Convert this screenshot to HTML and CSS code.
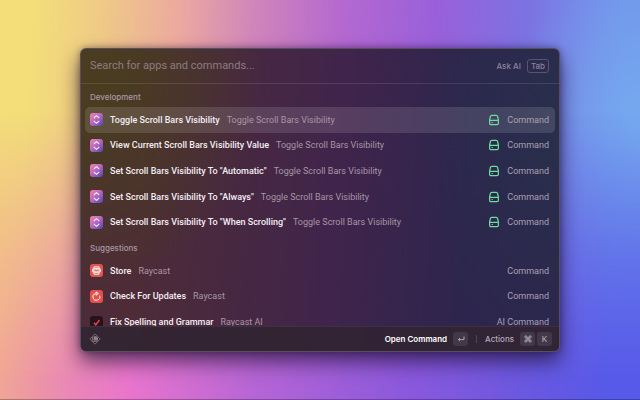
FILE: index.html
```html
<!DOCTYPE html>
<html lang="en">
<head>
<meta charset="utf-8">
<title>Launcher</title>
<link rel="stylesheet" href="styles.css">
</head>
<body>
<svg class="defs" aria-hidden="true">
  <defs>
    <linearGradient id="pink" x1="0" y1="0" x2="1" y2="1">
      <stop offset="0" stop-color="#f583b0"/>
      <stop offset=".5" stop-color="#b465c0"/>
      <stop offset="1" stop-color="#4c45b4"/>
    </linearGradient>
  </defs>
  <symbol id="scroll" viewBox="0 0 13 13">
    <rect width="13" height="13" rx="3" fill="url(#pink)"/>
    <path d="M4.2 5.3V4.7L6.5 2.7l2.3 2v.6M4.2 7.7v.6l2.3 2 2.3-2v-.6" fill="none" stroke="#fff" stroke-width="1.1" stroke-linejoin="round"/>
  </symbol>
  <symbol id="drive" viewBox="0 0 12 12">
    <path d="M1.6 6 2.4 2.5Q2.7 1.4 3.8 1.4h4.4q1.1 0 1.4 1.1L10.4 6v3.2q0 1.4-1.4 1.4H3Q1.6 10.6 1.6 9.2ZM1.6 6.4h8.8M3.6 8.5h1.2" fill="none" stroke="#6fdc9d" stroke-width="1.2" stroke-linejoin="round"/>
  </symbol>
  <symbol id="store" viewBox="0 0 13 13">
    <rect width="13" height="13" rx="3" fill="#e5544f"/>
    <path d="M4 4.2V2.9h5v1.3M4 8.8v1.4h5V8.8" fill="none" stroke="#fff" stroke-width="1"/>
    <rect x="2.4" y="4.5" width="8.2" height="4" rx="1.4" fill="#f9c9c4" stroke="#fff" stroke-width=".7"/>
    <path d="M4.4 6q2.1 1.4 4.2 0" fill="none" stroke="#d94a48" stroke-width=".9"/>
  </symbol>
  <symbol id="update" viewBox="0 0 13 13">
    <rect width="13" height="13" rx="3" fill="#e5504b"/>
    <path d="M9.6 5.6A3.4 3.4 0 1 1 5.4 3.6M6 2v3.2L8.4 3.4Z" fill="none" stroke="#fff" stroke-width="1"/>
  </symbol>
  <symbol id="check" viewBox="0 0 13 13">
    <rect width="13" height="13" rx="3" fill="#25131f"/>
    <path d="m4 6.8 1.8 2L9.4 4" fill="none" stroke="#ee4840" stroke-width="1.4"/>
  </symbol>
</svg>
<main class="window">
  <header class="search">
    <input class="query" type="text" aria-label="Search" placeholder="Search for apps and commands...">
    <button class="ask" type="button">Ask AI <kbd class="tab">Tab</kbd></button>
  </header>
  <div class="results">
    <section>
      <h2 class="heading">Development</h2>
      <ul class="list five">
        <li class="row selected"><svg class="icon"><use href="#scroll"/></svg><span class="title">Toggle Scroll Bars Visibility</span><span class="sub">Toggle Scroll Bars Visibility</span><svg class="drive"><use href="#drive"/></svg><span class="kind">Command</span></li>
        <li class="row"><svg class="icon"><use href="#scroll"/></svg><span class="title">View Current Scroll Bars Visibility Value</span><span class="sub">Toggle Scroll Bars Visibility</span><svg class="drive"><use href="#drive"/></svg><span class="kind">Command</span></li>
        <li class="row"><svg class="icon"><use href="#scroll"/></svg><span class="title">Set Scroll Bars Visibility To "Automatic"</span><span class="sub">Toggle Scroll Bars Visibility</span><svg class="drive"><use href="#drive"/></svg><span class="kind">Command</span></li>
        <li class="row"><svg class="icon"><use href="#scroll"/></svg><span class="title">Set Scroll Bars Visibility To "Always"</span><span class="sub">Toggle Scroll Bars Visibility</span><svg class="drive"><use href="#drive"/></svg><span class="kind">Command</span></li>
        <li class="row"><svg class="icon"><use href="#scroll"/></svg><span class="title">Set Scroll Bars Visibility To "When Scrolling"</span><span class="sub">Toggle Scroll Bars Visibility</span><svg class="drive"><use href="#drive"/></svg><span class="kind">Command</span></li>
      </ul>
    </section>
    <section>
      <h2 class="heading">Suggestions</h2>
      <ul class="list three">
        <li class="row"><svg class="icon"><use href="#store"/></svg><span class="title">Store</span><span class="sub">Raycast</span><span class="kind">Command</span></li>
        <li class="row"><svg class="icon"><use href="#update"/></svg><span class="title">Check For Updates</span><span class="sub">Raycast</span><span class="kind">Command</span></li>
        <li class="row"><svg class="icon"><use href="#check"/></svg><span class="title">Fix Spelling and Grammar</span><span class="sub">Raycast AI</span><span class="kind">AI Command</span></li>
      </ul>
    </section>
  </div>
  <footer class="bar">
    <svg class="logo" viewBox="0 0 12 12" aria-hidden="true"><path d="M6 .8 11.2 6 6 11.2.8 6ZM3.5 3.5v5h5" fill="none" stroke="#75676f" stroke-width="1"/><path d="M4.6 3.2h2.6l1.8 1.8v2.6H4.6z" fill="#8f828b"/></svg>
    <button class="action primary" type="button">Open Command
      <kbd class="key"><svg class="glyph" viewBox="0 0 8 8"><path d="M7 1.5V4.6H1.4M3 3 1.4 4.6 3 6.2" fill="none" stroke="currentColor"/></svg></kbd></button>
    <span class="divider"></span>
    <button class="action" type="button">Actions
      <span class="keys"><kbd class="key"><svg class="glyph" viewBox="0 0 8 8"><path d="M3 3V1.9A1.1 1.1 0 1 0 1.9 3H6.1A1.1 1.1 0 1 0 5 1.9V6.1A1.1 1.1 0 1 0 6.1 5H1.9A1.1 1.1 0 1 0 3 6.1Z" fill="none" stroke="currentColor"/></svg></kbd><kbd class="key">K</kbd></span></button>
  </footer>
</main>
</body>
</html>
```
FILE: styles.css
```css
* { box-sizing: border-box; }

body {
  position: relative;
  isolation: isolate;
  margin: 0;
  height: 100vh;
  padding: 48px 80px;
  display: flex;
  overflow: hidden;
  font: 500 9px/12px Roboto, sans-serif;
  color: #a797a5;
  background:
    radial-gradient(ellipse 20% 55% at 100% 34%, #76abef 0, #76abef00 100%),
    linear-gradient(93deg, #f3de79 5%, #efcb85 15%, #ecaa9f 27%, #cf84bb 39%, #b468d0 52%, #9a60da 66%, #7c72e2 80%, #7190ea 95%);
}

/* warmer-to-indigo band rising from the bottom edge */
body::before {
  content: "";
  position: absolute;
  inset: 0;
  z-index: -1;
  border-bottom: 1px solid #00000044;
  background: linear-gradient(90deg, #f0a595 0, #ea8cb0 9%, #e975cd 20%, #b565d5 40%, #8a58dc 64%, #6a58e0 82%, #5759e8 95%);
  mask-image: linear-gradient(#0000 28%, #0009 65%, #000 95%);
}

.defs { position: absolute; width: 0; height: 0; }

.window {
  flex: 1;
  min-width: 0;
  display: flex;
  flex-direction: column;
  overflow: hidden;
  border: 1px solid #594e5f;
  border-radius: 6px;
  background:
    radial-gradient(ellipse 38% 72% at 0 8%, #493c20 20%, #493c2000 100%),
    radial-gradient(ellipse 30% 80% at 100% 25%, #292e4c 10%, #292e4c00 100%),
    linear-gradient(94deg, #4d2c37 14%, #41244b 52%, #2d254d 80%);
  box-shadow: 0 10px 20px #1b0c30aa, 0 0 6px #1b0c3066;
}

.search {
  display: flex;
  align-items: center;
  height: 35px;
  padding: 0 10px 0 9px;
  border-bottom: 1px solid #ffffff1c;
}

.query {
  flex: 1;
  min-width: 0;
  padding: 0;
  border: 0;
  outline: 0;
  background: none;
  color: #fff;
  font: 400 11px/14px Roboto, sans-serif;
}
.query::placeholder { color: #8e7b83; opacity: 1; }

button {
  padding: 0;
  border: 0;
  background: none;
  color: inherit;
  font: inherit;
  display: flex;
  align-items: center;
}
kbd { font: inherit; }
.ask { gap: 6px; font: 500 8px/12px Inter, sans-serif; color: #8d819c; }
.tab {
  padding: 0 3px;
  border: 1px solid #5d516f;
  border-radius: 3px;
}

.results {
  flex: 1;
  min-height: 0;
  overflow: hidden;
  padding: 0 4px;
}

.heading {
  margin: 0;
  height: 23px;
  padding: 6px 5px 0;
  font: 500 8px/14px Inter, sans-serif;
  color: #a998a3;
}

.list {
  margin: 0;
  padding: 0;
  list-style: none;
  display: grid;
  grid-auto-rows: 1fr;
}
.five { height: 128px; }
.three { height: 77px; }

.row {
  display: flex;
  align-items: center;
  gap: 7px;
  padding: 0 6px 0 5px;
  border-radius: 5px;
  white-space: nowrap;
}
.selected { background: #ffffff1f; }
.icon { width: 13px; height: 13px; }
.title { color: #f4eef4; }
.sub { flex: 1; font-weight: 400; }
.drive { width: 12px; height: 12px; }
.kind { font-weight: 400; color: #aaa0b2; }

.bar {
  display: flex;
  align-items: center;
  height: 25px;
  padding: 0 7px 0 8px;
  gap: 8px;
  border-top: 1px solid #ffffff10;
  background: #302432dd;
}
.logo { width: 12px; height: 12px; margin-right: auto; }
.action { gap: 6px; font: 500 8px/12px Inter, sans-serif; color: #b6aaba; }
.primary { font-weight: 600; color: #fff; }
.keys { display: flex; gap: 2px; }
.key {
  display: grid;
  place-items: center;
  width: 15px;
  height: 14px;
  border-radius: 3px;
  background: #43384a;
  color: #ada2b2;
}
.glyph { width: 8px; height: 8px; }
.divider { width: 1px; height: 8px; background: #514656; }
```
